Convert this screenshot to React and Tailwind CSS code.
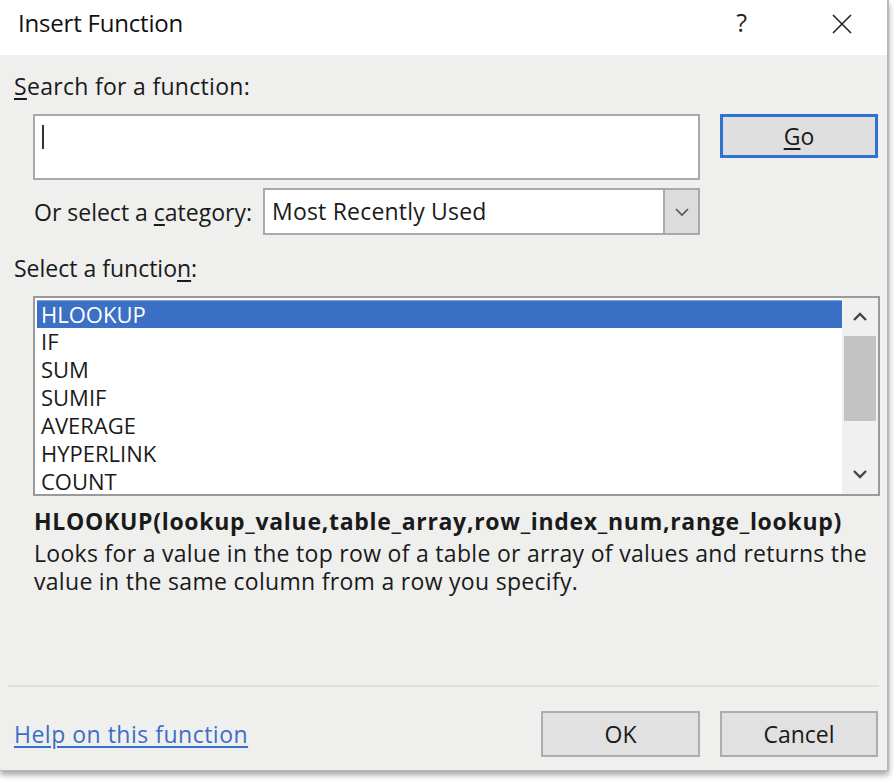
import React from "react";

const font = { fontFamily: '"Open Sans", "Noto Sans", sans-serif' };

function U({ children }) {
  return <span className="underline underline-offset-[3px] decoration-[1.5px]">{children}</span>;
}

export default function App() {
  const items = ["HLOOKUP", "IF", "SUM", "SUMIF", "AVERAGE", "HYPERLINK", "COUNT"];
  return (
    <div className="w-[894px] h-[784px] bg-white" style={font}>
      <div className="w-[889px] h-[771px] bg-[#efefed] flex flex-col border-r-2 border-b border-[#b8b8b8] shadow-[0_4px_6px_rgba(0,0,0,0.35)] text-[#1a1a1a]">
        {/* title bar */}
        <div className="h-[55px] bg-white flex items-center pl-[18px] pr-[34px]">
          <div className="text-[24px] tracking-[-0.2px] text-[#111] -mt-[10px]">Insert Function</div>
          <div className="flex-1" />
          <div className="text-[25px] text-[#222] -mt-[10px] mr-[84px]">?</div>
          <svg width="22" height="22" viewBox="0 0 22 22" className="-mt-[8px]">
            <path d="M2 2 L20 20 M20 2 L2 20" stroke="#222" strokeWidth="1.6" />
          </svg>
        </div>

        {/* body */}
        <div className="flex flex-col pl-[14px]">
          <div className="mt-[17px] h-[28px] leading-[28px] text-[23px] tracking-[0.3px]">
            <U>S</U>earch for a function:
          </div>
          <div className="mt-[14px] flex pl-[19px]">
            <div className="w-[667px] h-[66px] bg-white border-2 border-[#a9a9a9] relative">
              <div className="absolute left-[7px] top-[9px] w-[2px] h-[24px] bg-[#333]" />
            </div>
            <div className="ml-[20px] w-[158px] h-[44px] bg-[#dfdfdf] border-[3px] border-[#2f73cf] flex items-center justify-center text-[23px]">
              <span><U>G</U>o</span>
            </div>
          </div>
          <div className="mt-[8px] flex items-center pl-[20px]">
            <div className="w-[229px] text-[23px] leading-[28px] whitespace-nowrap">
              Or select a <U>c</U>ategory:
            </div>
            <div className="w-[437px] h-[47px] bg-white border-2 border-[#a9a9a9] flex items-stretch">
              <div className="flex-1 flex items-center pl-[7px] text-[23px] tracking-[0.2px]">Most Recently Used</div>
              <div className="w-[35px] bg-[#dcdcdc] border-l-2 border-[#a9a9a9] flex items-center justify-center">
                <svg width="16" height="10" viewBox="0 0 16 10">
                  <path d="M2 2 L8 8 L14 2" stroke="#555" strokeWidth="1.6" fill="none" />
                </svg>
              </div>
            </div>
          </div>
          <div className="mt-[19px] h-[28px] leading-[28px] text-[23px]">
            Select a functio<U>n</U>:
          </div>
          <div className="mt-[14px] ml-[19px] w-[847px] h-[200px] bg-white border-2 border-[#9a9a9a] flex">
            <div className="flex-1 pt-[2px] pl-[2px]">
              {items.map((it, i) => (
                <div
                  key={it}
                  className={
                    "h-[28px] leading-[26px] pb-[2px] pl-[4px] text-[22px] " +
                    (i === 0 ? "bg-[#3b70c4] text-white border-t border-[#7aa6e6]" : "text-[#1a1a1a]")
                  }
                >
                  {it}
                </div>
              ))}
            </div>
            <div className="w-[36px] bg-[#f0f0f0] flex flex-col items-center">
              <div className="h-[38px] flex items-center justify-center">
                <svg width="16" height="10" viewBox="0 0 16 10">
                  <path d="M2 8 L8 2 L14 8" stroke="#444" strokeWidth="2.4" fill="none" />
                </svg>
              </div>
              <div className="w-[32px] h-[85px] bg-[#c3c3c3]" />
              <div className="flex-1" />
              <div className="h-[40px] flex items-center justify-center">
                <svg width="16" height="10" viewBox="0 0 16 10">
                  <path d="M2 2 L8 8 L14 2" stroke="#444" strokeWidth="2.4" fill="none" />
                </svg>
              </div>
            </div>
          </div>
          <div className="mt-[11px] pl-[20px] h-[28px] leading-[28px] text-[23px] font-bold tracking-[0.7px] whitespace-nowrap">
            HLOOKUP(lookup_value,table_array,row_index_num,range_lookup)
          </div>
          <div className="mt-[4px] pl-[20px] text-[23px] tracking-[0.3px] whitespace-nowrap flex flex-col">
            <div className="h-[28px] leading-[28px]">
              Looks for a value in the top row of a table or array of values and returns the
            </div>
            <div className="h-[28px] leading-[28px]">value in the same column from a row you specify.</div>
          </div>
        </div>
        <div className="mt-[90px] mx-[8px] h-[2px] bg-[#e0e0de]" />
        <div className="mt-[24px] flex items-center pl-[14px]">
          <div className="text-[23px] tracking-[0.5px] text-[#3a6fc9] underline underline-offset-[3px] decoration-[1.5px]">
            Help on this function
          </div>
          <div className="flex-1" />
          <div className="w-[159px] h-[46px] bg-[#e1e1e1] border-2 border-[#adadad] flex items-center justify-center text-[23px]">
            OK
          </div>
          <div className="ml-[20px] mr-[9px] w-[158px] h-[46px] bg-[#e1e1e1] border-2 border-[#adadad] flex items-center justify-center text-[23px]">
            Cancel
          </div>
        </div>
      </div>
    </div>
  );
}
